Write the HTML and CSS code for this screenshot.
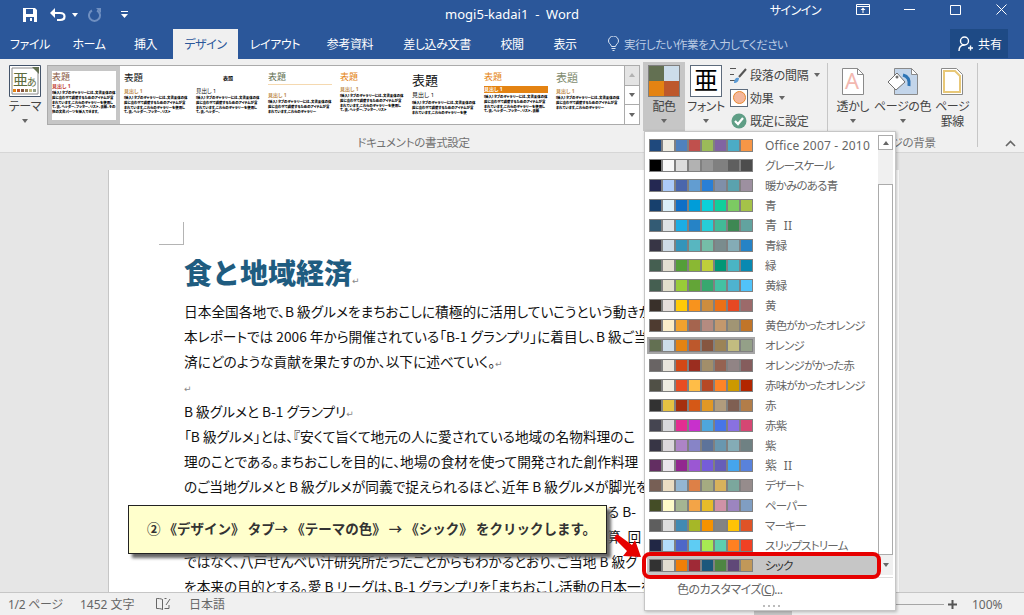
FILE: index.html
```html
<!DOCTYPE html>
<html lang="ja">
<head>
    <meta charset="UTF-8">
    <title>mogi5-kadai1 - Word</title>
    <link rel="stylesheet" href="styles.css">
</head>
<body>
<div class="app">

    <!-- タイトルバー -->
    <header class="titlebar">
        <div class="qat">
            <svg class="qat-save" width="16" height="16" viewBox="0 0 16 16"><path fill="#fff" d="M1 1h12l2 2v12H1z"/><path fill="#2b579a" d="M4 2h7v5H4zM4 10h8v5H4z"/><path fill="#fff" d="M8 11h2v3H8z"/></svg>
            <svg class="qat-undo" width="17" height="14" viewBox="0 0 17 14"><path fill="none" stroke="#fff" stroke-width="2.2" d="M3 5h7c6 0 6 7 0 7H7"/><path fill="#fff" d="M0 5l5-5v10z"/></svg>
            <i class="caret caret-white qat-caret"></i>
            <svg class="qat-redo" width="14" height="14" viewBox="0 0 14 14"><path fill="none" stroke="#6f8fc0" stroke-width="2" d="M9 2.5a5.5 5.5 0 1 1-5 0"/><path fill="#6f8fc0" d="M8 0h5v5z"/></svg>
            <svg class="qat-more" width="7" height="8" viewBox="0 0 7 8"><path fill="#fff" d="M0 0h7v1H0zM0 3h7L3.5 7z"/></svg>
        </div>
        <div class="doc-title">mogi5-kadai1&nbsp; - &nbsp;Word</div>
        <div class="win">
            <span class="signin">サインイン</span>
            <span class="win-btn"><svg width="14" height="11" viewBox="0 0 14 11"><path fill="none" stroke="#fff" d="M.5.5h13v10H.5zM.5 2.5h13"/><path fill="#fff" d="M7 3.5L4.500 6h2v3h1V6h2z"/></svg></span>
            <span class="win-btn"><svg width="11" height="2" viewBox="0 0 11 2"><path fill="#fff" d="M0 0h11v1H0z"/></svg></span>
            <span class="win-btn"><svg width="11" height="10" viewBox="0 0 11 10"><path fill="none" stroke="#fff" d="M.5.5h10v9H.5z"/></svg></span>
            <span class="win-btn"><svg width="11" height="11" viewBox="0 0 11 11"><path stroke="#fff" d="M.5.5l10 10M10.500.5l-10 10"/></svg></span>
        </div>
    </header>

    <!-- タブ -->
    <nav class="tabs">
        <span class="tab">ファイル</span>
        <span class="tab">ホーム</span>
        <span class="tab">挿入</span>
        <span class="tab tab-active">デザイン</span>
        <span class="tab">レイアウト</span>
        <span class="tab">参考資料</span>
        <span class="tab">差し込み文書</span>
        <span class="tab">校閲</span>
        <span class="tab">表示</span>
        <span class="tell">
            <svg width="11" height="15" viewBox="0 0 11 15"><path fill="none" stroke="#dbe5f3" d="M3.500 10.500C3 8 .5 7.500.5 5a5 5 0 0 1 10 0c0 2.500-2.500 3-3 5.500zM3.500 12.500h4M4.500 14.500h2"/></svg>
            実行したい作業を入力してください
        </span>
        <span class="share">
            <svg width="15" height="15" viewBox="0 0 15 15"><circle cx="6.500" cy="5" r="4" fill="none" stroke="#fff" stroke-width="1.400"/><path fill="none" stroke="#fff" stroke-width="1.400" d="M1 15c0-4 2-6 5.500-6M10 12h5M12.500 9.500v5"/></svg>
            共有
        </span>
    </nav>

    <!-- リボン -->
    <section class="ribbon">
        <div class="group group-doc">
            <div class="group-row">
                <div class="big-btn btn-theme">
                    <svg class="big-icon" width="32" height="32" viewBox="0 0 32 32">
                        <path fill="#fff" stroke="#44546a" d="M.5.5h31v31H.5z"/>
                        <path fill="#fff" stroke="#8a8a8a" d="M3 3h22l4 4v22H3z"/>
                        <path fill="#637052" d="M23 2h7v7z"/>
                        <text x="4" y="20" class="theme-kanji">亜</text>
                        <text x="18" y="21" class="theme-kana">あ</text>
                        <path fill="#e48312" d="M4 24h3v3H4z"/><path fill="#bd582c" d="M8 24h3v3H8z"/><path fill="#865640" d="M12 24h3v3h-3z"/><path fill="#9b8357" d="M16 24h3v3h-3z"/><path fill="#c2bc80" d="M20 24h3v3h-3z"/><path fill="#94a088" d="M24 24h3v3h-3z"/>
                    </svg>
                    <span class="big-label">テーマ</span>
                    <i class="caret"></i>
                </div>

                <div class="gallery">
                    <div class="thumb thumb-sel">
                        <b class="t-title t-brown">表題</b>
                        <b class="t-head t-red">見出し 1</b>
                        <p class="t-body">[挿入] タブのギャラリーには、文書全体の体裁に合わせて調整するためのアイテムが含まれています。これらのギャラリーを使用して、表、ヘッダー、フッター、リスト、表紙、その他の文書パーツを挿入できます。</p>
                    </div>
                    <div class="thumb">
                        <b class="t-title t-black">表題</b>
                        <b class="t-head t-tan">見出し 1</b>
                        <p class="t-body">[挿入] タブのギャラリーには、文書全体の体裁に合わせて調整するためのアイテムが含まれています。これらのギャラリーを使用して、表、ヘッダー、フッター、リスト</p>
                    </div>
                    <div class="thumb">
                        <b class="t-title t-small">表題</b>
                        <b class="t-head t-ink">見出し 1</b>
                        <p class="t-body">[挿入] タブのギャラリーには、文書全体の体裁に合わせて調整するためのアイテムが含まれています。これらのギャラリーを使用して、表、ヘッダー、</p>
                    </div>
                    <div class="thumb">
                        <b class="t-title t-green t-lined">表題</b>
                        <b class="t-head t-tan">見出し 1</b>
                        <p class="t-body">[挿入] タブのギャラリーには、文書全体の体裁に合わせて調整するためのアイテムが含まれています。これらのギャラリー</p>
                    </div>
                    <div class="thumb">
                        <b class="t-title t-orange">表題</b>
                        <b class="t-head t-tan">見出し 1</b>
                        <p class="t-body">[挿入] タブのギャラリーには、文書全体の体裁に合わせて調整するためのアイテムが含まれています。これらのギャラリーを使用して、表、ヘッダー、フッター、リスト</p>
                    </div>
                    <div class="thumb">
                        <b class="t-title t-huge">表題</b>
                        <b class="t-head t-ink t-wide">見出し 1</b>
                        <p class="t-body">[挿入] タブのギャラリーには、文書全体の体裁に合わせて調整するためのアイテムが含まれています。これらのギャラリーを使</p>
                    </div>
                    <div class="thumb">
                        <b class="t-title t-orange">表題</b>
                        <b class="t-head t-band">見出し 1</b>
                        <p class="t-body">[挿入] タブのギャラリーには、文書全体の体裁に合わせて調整するためのアイテムが含まれています。これらのギャラリーを使用して、表、ヘッダー、フッター、リスト、表紙</p>
                    </div>
                    <div class="thumb">
                        <b class="t-title t-sage">表題</b>
                        <b class="t-head t-tan">見出し 1</b>
                        <p class="t-body">[挿入] タブのギャラリーには、文書全体の体裁に合わせて調整するためのアイテムが含まれています。これらのギャラリー</p>
                    </div>
                    <div class="gallery-scroll">
                        <span class="gs-btn gs-off"><i class="caret caret-up"></i></span>
                        <span class="gs-btn"><i class="caret"></i></span>
                        <span class="gs-btn gs-more"><i class="caret"></i></span>
                    </div>
                </div>

                <div class="big-btn btn-scheme">
                    <span class="scheme-icon"><i class="s1"></i><i class="s2"></i><i class="s3"></i><i class="s4"></i></span>
                    <span class="big-label">配色</span>
                    <i class="caret"></i>
                </div>

                <div class="big-btn">
                    <span class="font-icon">亜</span>
                    <span class="big-label">フォント</span>
                    <i class="caret"></i>
                </div>

                <div class="options">
                    <div class="opt">
                        <svg width="18" height="18" viewBox="0 0 18 18"><path stroke="#555" d="M0 2.500h6M0 8.500h4M0 14.500h5"/><path fill="#5b9bd5" d="M4 17c0-4 2-6 5-5 0 3-2 5-5 5z"/><path stroke="#555" stroke-width="2" d="M9 11l7-8"/></svg>
                        <span>段落の間隔</span><i class="caret"></i>
                    </div>
                    <div class="opt">
                        <span class="fx-box"><i></i></span>
                        <span>効果</span><i class="caret"></i>
                    </div>
                    <div class="opt">
                        <svg width="18" height="18" viewBox="0 0 18 18"><circle cx="9" cy="9" r="7.500" fill="#5f9e86"/><path fill="none" stroke="#fff" stroke-width="2.200" d="M5 9l3 3 5-6"/></svg>
                        <span>既定に設定</span>
                    </div>
                </div>
            </div>
            <div class="group-label">ドキュメントの書式設定</div>
        </div>
        <span class="sep"></span>

        <div class="group group-page">
            <div class="group-row">
                <div class="big-btn btn-page">
                    <svg class="big-icon" width="24" height="32" viewBox="0 0 24 32"><path fill="#fff" stroke="#8a8a8a" d="M1.500 3.500h15l6 6v20h-21z"/><path fill="none" stroke="#8a8a8a" d="M16.500 3.500v6h6"/><text x="4" y="24" class="wm-letter">A</text></svg>
                    <span class="big-label">透かし</span>
                    <i class="caret"></i>
                </div>
                <div class="big-btn btn-page">
                    <svg class="big-icon" width="32" height="32" viewBox="0 0 32 32"><path fill="#c3d5ea" stroke="#8a8a8a" d="M7.500 3.500h17l6 6v20h-23z"/><path fill="#fff" stroke="#8a8a8a" d="M24.500 3.500v6h6z"/><path fill="none" stroke="#2e75b6" stroke-width="3" d="M16 10c4 1 7 4 6 11"/><path fill="#fff" stroke="#6e6e6e" d="M1 17l9-9 8 9-9 8z"/><circle cx="10" cy="12" r="1.500" fill="#6e6e6e"/></svg>
                    <span class="big-label">ページの色</span>
                    <i class="caret"></i>
                </div>
                <div class="big-btn btn-page">
                    <svg class="big-icon" width="24" height="32" viewBox="0 0 24 32"><path fill="#fff" stroke="#8a8a8a" d="M1.500 3.500h15l6 6v20h-21z"/><path fill="none" stroke="#e8c878" stroke-width="2" d="M4 6h11l5 5v16H4z"/></svg>
                    <span class="big-label">ページ<br>罫線</span>
                </div>
            </div>
            <div class="group-label">ページの背景</div>
        </div>
        <span class="sep"></span>
        <svg class="collapse" width="11" height="7" viewBox="0 0 11 7"><path fill="none" stroke="#666" stroke-width="1.600" d="M1 6l4.500-4.500L10 6"/></svg>
    </section>

    <!-- 文書 -->
    <main class="workspace">
        <article class="page">
            <div class="crop"></div>
            <h1 class="doc-head">食と地域経済<i class="pm">↵</i></h1>
            <p class="line">日本全国各地で、B 級グルメをまちおこしに積極的に活用していこうという動きが</p>
            <p class="line">本レポートでは 2006 年から開催されている「B-1 グランプリ」に着目し、B 級ご当</p>
            <p class="line">済にどのような貢献を果たすのか、以下に述べていく。<i class="pm">↵</i></p>
            <p class="line"><i class="pm">↵</i></p>
            <p class="line">B 級グルメと B-1 グランプリ<i class="pm">↵</i></p>
            <p class="line">「B 級グルメ」とは、『安くて旨くて地元の人に愛されている地域の名物料理のこ</p>
            <p class="line">理のことである。まちおこしを目的に、地場の食材を使って開発された創作料理</p>
            <p class="line">のご当地グルメと B 級グルメが同義で捉えられるほど、近年 B 級グルメが脚光を</p>
            <p class="line line-behind">る B-</p>
            <p class="line line-behind">算、回</p>
            <p class="line">ではなく、八戸せんべい汁研究所だったことからもわかるとおり、ご当地 B 級グ</p>
            <p class="line">を本来の目的とする。愛 B リーグは、B-1 グランプリを「まちおこし活動の日本一を</p>
        </article>
    </main>

    <!-- ステータスバー -->
    <footer class="status">
        <span class="st-page">1/2 ページ</span>
        <span class="st-words">1452 文字</span>
        <svg class="st-book" width="16" height="14" viewBox="0 0 16 14"><path fill="none" stroke="#666" d="M7.500 2.500C6 1.500 3 1.500 1.500 1.500v10c2 0 4.500 0 6 1zM7.500 12.500V2.500M9.500 1.500h2M9.500 11.500h4.500V8M11 8l4-6"/></svg>
        <span class="st-lang">日本語</span>
        <span class="st-view"></span>
        <span class="st-slider"></span>
        <svg class="st-plus" width="9" height="9" viewBox="0 0 9 9"><path fill="#555" d="M3.500 0h2v3.500H9v2H5.500V9h-2V5.500H0v-2h3.500z"/></svg>
        <span class="st-zoom">100%</span>
    </footer>

    <!-- 配色ドロップダウン -->
    <div class="menu">
        <div class="menu-body">
            <ul class="schemes">
                <li class="scheme scheme-latin"><span class="strip"><i style="background:#1f497d"></i><i style="background:#eeece1"></i><i style="background:#4f81bd"></i><i style="background:#c0504d"></i><i style="background:#9bbb59"></i><i style="background:#8064a2"></i><i style="background:#4bacc6"></i><i style="background:#f79646"></i></span>Office 2007 - 2010</li>
                <li class="scheme"><span class="strip"><i style="background:#000000"></i><i style="background:#f8f8f8"></i><i style="background:#dddddd"></i><i style="background:#b2b2b2"></i><i style="background:#969696"></i><i style="background:#808080"></i><i style="background:#5f5f5f"></i><i style="background:#4d4d4d"></i></span>グレースケール</li>
                <li class="scheme"><span class="strip"><i style="background:#242852"></i><i style="background:#accbf9"></i><i style="background:#4a66ac"></i><i style="background:#629dd1"></i><i style="background:#297fd5"></i><i style="background:#7f8fa9"></i><i style="background:#5aa2ae"></i><i style="background:#9d90a0"></i></span>暖かみのある青</li>
                <li class="scheme"><span class="strip"><i style="background:#17406d"></i><i style="background:#dbeff9"></i><i style="background:#0f6fc6"></i><i style="background:#009dd9"></i><i style="background:#0bd0d9"></i><i style="background:#10cf9b"></i><i style="background:#7cca62"></i><i style="background:#a5c249"></i></span>青</li>
                <li class="scheme scheme-latin"><span class="strip"><i style="background:#335b74"></i><i style="background:#dfe3e5"></i><i style="background:#1cade4"></i><i style="background:#2683c6"></i><i style="background:#27ced7"></i><i style="background:#42ba97"></i><i style="background:#3e8853"></i><i style="background:#62a39f"></i></span>青&nbsp; II</li>
                <li class="scheme"><span class="strip"><i style="background:#373545"></i><i style="background:#cedbe6"></i><i style="background:#3494ba"></i><i style="background:#58b6c0"></i><i style="background:#75bda7"></i><i style="background:#7a8c8e"></i><i style="background:#84acb6"></i><i style="background:#2683c6"></i></span>青緑</li>
                <li class="scheme"><span class="strip"><i style="background:#455f51"></i><i style="background:#e3ded1"></i><i style="background:#549e39"></i><i style="background:#8ab833"></i><i style="background:#c0cf3a"></i><i style="background:#029676"></i><i style="background:#4ab5c4"></i><i style="background:#0989b1"></i></span>緑</li>
                <li class="scheme"><span class="strip"><i style="background:#455f51"></i><i style="background:#e2dfcc"></i><i style="background:#99cb38"></i><i style="background:#63a537"></i><i style="background:#37a76f"></i><i style="background:#44c1a3"></i><i style="background:#4eb3cf"></i><i style="background:#51c3f9"></i></span>黄緑</li>
                <li class="scheme"><span class="strip"><i style="background:#39302a"></i><i style="background:#e5dedb"></i><i style="background:#ffca08"></i><i style="background:#f8931d"></i><i style="background:#ce8d3e"></i><i style="background:#ec7016"></i><i style="background:#e64823"></i><i style="background:#9c6a6a"></i></span>黄</li>
                <li class="scheme"><span class="strip"><i style="background:#4e3b30"></i><i style="background:#fbeec9"></i><i style="background:#f0a22e"></i><i style="background:#a5644e"></i><i style="background:#b58b80"></i><i style="background:#c3986d"></i><i style="background:#a19574"></i><i style="background:#c17529"></i></span>黄色がかったオレンジ</li>
                <li class="scheme"><span class="strip strip-on"><i style="background:#637052"></i><i style="background:#ccddea"></i><i style="background:#e48312"></i><i style="background:#bd582c"></i><i style="background:#865640"></i><i style="background:#9b8357"></i><i style="background:#c2bc80"></i><i style="background:#94a088"></i></span>オレンジ</li>
                <li class="scheme"><span class="strip"><i style="background:#696464"></i><i style="background:#e9e5dc"></i><i style="background:#d34817"></i><i style="background:#9b2d1f"></i><i style="background:#a28e6a"></i><i style="background:#956251"></i><i style="background:#918485"></i><i style="background:#855d5d"></i></span>オレンジがかった赤</li>
                <li class="scheme"><span class="strip"><i style="background:#505046"></i><i style="background:#eeece1"></i><i style="background:#e84c22"></i><i style="background:#ffbd47"></i><i style="background:#b64926"></i><i style="background:#ff8427"></i><i style="background:#cc9900"></i><i style="background:#b22600"></i></span>赤味がかったオレンジ</li>
                <li class="scheme"><span class="strip"><i style="background:#323232"></i><i style="background:#e5c243"></i><i style="background:#a5300f"></i><i style="background:#d55816"></i><i style="background:#e19825"></i><i style="background:#b19c7d"></i><i style="background:#7f5f52"></i><i style="background:#b27d49"></i></span>赤</li>
                <li class="scheme"><span class="strip"><i style="background:#454551"></i><i style="background:#d8d9dc"></i><i style="background:#e32d91"></i><i style="background:#c830cc"></i><i style="background:#4ea6dc"></i><i style="background:#4775e7"></i><i style="background:#8971e1"></i><i style="background:#d54773"></i></span>赤紫</li>
                <li class="scheme"><span class="strip"><i style="background:#373545"></i><i style="background:#dcd8dc"></i><i style="background:#ad84c6"></i><i style="background:#8784c7"></i><i style="background:#5d739a"></i><i style="background:#6997af"></i><i style="background:#84acb6"></i><i style="background:#6f8183"></i></span>紫</li>
                <li class="scheme scheme-latin"><span class="strip"><i style="background:#632e62"></i><i style="background:#eae5eb"></i><i style="background:#92278f"></i><i style="background:#9b57d3"></i><i style="background:#755dd9"></i><i style="background:#665eb8"></i><i style="background:#45a5ed"></i><i style="background:#5982db"></i></span>紫&nbsp; II</li>
                <li class="scheme"><span class="strip"><i style="background:#775f55"></i><i style="background:#ebddc3"></i><i style="background:#94b6d2"></i><i style="background:#dd8047"></i><i style="background:#a5ab81"></i><i style="background:#d8b25c"></i><i style="background:#7ba79d"></i><i style="background:#968c8c"></i></span>デザート</li>
                <li class="scheme"><span class="strip"><i style="background:#444d26"></i><i style="background:#fefac9"></i><i style="background:#a5b592"></i><i style="background:#f3a447"></i><i style="background:#e7bc29"></i><i style="background:#d092a7"></i><i style="background:#9c85c0"></i><i style="background:#809ec2"></i></span>ペーパー</li>
                <li class="scheme"><span class="strip"><i style="background:#5e5e5e"></i><i style="background:#dddddd"></i><i style="background:#418ab3"></i><i style="background:#a6b727"></i><i style="background:#f69200"></i><i style="background:#838383"></i><i style="background:#fec306"></i><i style="background:#df5327"></i></span>マーキー</li>
                <li class="scheme"><span class="strip"><i style="background:#212745"></i><i style="background:#b4dcfa"></i><i style="background:#4e67c8"></i><i style="background:#5eccf3"></i><i style="background:#a7ea52"></i><i style="background:#5dceaf"></i><i style="background:#ff8021"></i><i style="background:#f14124"></i></span>スリップストリーム</li>
                <li class="scheme scheme-hover"><span class="strip"><i style="background:#323232"></i><i style="background:#e3ded1"></i><i style="background:#f07f09"></i><i style="background:#9f2936"></i><i style="background:#1b587c"></i><i style="background:#4e8542"></i><i style="background:#604878"></i><i style="background:#c19859"></i></span>シック</li>
            </ul>
            <div class="menu-bar">
                <span class="bar-up"><i class="caret caret-up"></i></span>
                <span class="bar-thumb"></span>
                <span class="bar-down"><i class="caret"></i></span>
            </div>
        </div>
        <div class="menu-custom">色のカスタマイズ(<u>C</u>)...</div>
        <div class="menu-grip"><i></i><i></i><i></i><i></i></div>
    </div>

    <!-- 注釈 -->
    <div class="red-frame"></div>
    <div class="callout">② 《デザイン》 タブ→ 《テーマの色》 → 《シック》 をクリックします。</div>
    <svg class="red-arrow" width="28" height="24" viewBox="0 0 28 24"><path fill="#e60000" d="M0 4l3-4 15 11 3-5 6 17-18-1 4-5z"/></svg>
</div>
</body>
</html>
```

FILE: styles.css
```css
*{
    margin: 0;
    padding: 0;
    box-sizing: border-box;
}

i{
    font-style: normal;
}

body{
    width: 1024px;
    height: 615px;
    overflow: hidden;
    font-family: "Noto Sans", "Noto Sans CJK JP", sans-serif;
    font-size: 12px;
    color: #444;
}

.app{
    position: relative;
    width: 1024px;
    height: 615px;
    display: flex;
    flex-direction: column;
    background: #e6e6e6;
    font-feature-settings: "palt";
}

.caret{
    display: block;
    width: 0;
    height: 0;
    border-left: 3.5px solid transparent;
    border-right: 3.5px solid transparent;
    border-top: 4px solid #666;
}

.caret-up{
    border-top: 0;
    border-bottom: 4px solid #666;
}

.caret-white{
    border-top-color: #fff;
}

/* タイトルバー */
.titlebar{
    height: 29px;
    display: grid;
    grid-template-columns: 1fr auto 1fr;
    align-items: center;
    background: #2b579a;
    color: #fff;
}

.qat{
    display: flex;
    align-items: center;
    padding-left: 22px;
}

.qat-undo{
    margin-left: 12px;
}

.qat-caret{
    margin-left: 5px;
}

.qat-redo{
    margin-left: 10px;
}

.qat-more{
    margin-left: 19px;
}

.doc-title{
    font-size: 13px;
    padding-bottom: 2px;
}

.win{
    display: flex;
    align-items: center;
    justify-content: flex-end;
    height: 29px;
}

.signin{
    margin-right: 19px;
    font-size: 12px;
    letter-spacing: -.5px;
    padding-bottom: 10px;
}

.win-btn{
    width: 46px;
    height: 29px;
    display: flex;
    align-items: center;
    justify-content: center;
    padding-bottom: 10px;
}

/* タブ */
.tabs{
    height: 30px;
    display: grid;
    grid-template-columns: 60px 58px 55px 65px 74px 76px 98px 52px 54px 1fr auto;
    background: #2b579a;
    color: #fff;
}

.tab{
    display: flex;
    align-items: center;
    justify-content: center;
    padding-bottom: 1px;
    font-size: 12px;
    letter-spacing: -.4px;
}

.tab-active{
    background: #f0f0f0;
    color: #2b579a;
}

.tell{
    display: flex;
    align-items: center;
    gap: 5px;
    padding: 0 0 1px 16px;
    color: #bccce4;
    font-size: 11.500px;
    letter-spacing: -.5px;
}

.share{
    display: flex;
    align-items: center;
    gap: 5px;
    width: 58px;
    height: 29px;
    margin-right: 16px;
    padding-left: 8px;
    background: #1e4a85;
    font-size: 12px;
}

/* リボン */
.ribbon{
    height: 94px;
    display: flex;
    background: #f0f0f0;
    border-bottom: 1px solid #d6d6d6;
}

.group{
    display: flex;
    flex-direction: column;
    justify-content: space-between;
}

.group-doc{
    width: 827px;
}

.group-page{
    width: 149px;
}

.group-row{
    display: flex;
    padding-top: 3px;
}

.group-doc .group-row{
    padding-left: 3px;
}

.group-label{
    height: 18px;
    line-height: 18px;
    text-align: center;
    color: #707070;
    font-size: 11.500px;
    letter-spacing: -.3px;
}

.sep{
    width: 1px;
    margin: 4px 0 5px;
    background: #c6c6c6;
}

.collapse{
    margin: 0 0 5px 27px;
    align-self: flex-end;
}

.big-btn{
    width: 42px;
    min-height: 69px;
    display: flex;
    flex-direction: column;
    align-items: center;
    padding-top: 3px;
}

.big-icon{
    flex: none;
}

.big-label{
    margin-top: 2px;
    line-height: 15px;
    letter-spacing: -.4px;
    text-align: center;
    white-space: nowrap;
}

.big-btn .caret{
    margin-top: 5px;
}

.btn-theme{
    width: 44px;
}

.btn-page{
    width: 50px;
}

.btn-scheme{
    background: #c6c6c6;
}

.theme-kanji{
    font-size: 15px;
    fill: #5d6b3d;
}

.theme-kana{
    font-size: 10px;
    fill: #5d6b3d;
}

.wm-letter{
    font-size: 22px;
    fill: #f2b8b0;
}

.scheme-icon{
    width: 32px;
    height: 32px;
    display: grid;
    grid-template-columns: 1fr 1fr;
    border: 1px solid #7f7f7f;
}

.s1{ background: #637052; }
.s2{ background: #ccddea; }
.s3{ background: #e48312; }
.s4{ background: #bd582c; }

.font-icon{
    width: 32px;
    height: 32px;
    border: 1px solid #5d6b7c;
    background: #fff;
    color: #000;
    font-size: 24px;
    line-height: 28px;
    text-align: center;
}

/* スタイルギャラリー */
.gallery{
    position: relative;
    width: 593px;
    height: 60px;
    margin: 3px 3px 0 0;
    display: flex;
    padding-right: 15px;
    border: 1px solid #ababab;
    background: #fff;
    overflow: hidden;
}

.thumb{
    flex: none;
    width: 72px;
    height: 52px;
    padding: 5px 4px 0;
    overflow: hidden;
}

.thumb-sel{
    height: 58px;
    border: 4px solid #c6c6c6;
    border-top-width: 5px;
    padding: 0;
}

.t-title{
    display: block;
    font-size: 9px;
    line-height: 12px;
    font-weight: 400;
}

.t-black{ color: #111; font-size: 9.500px; line-height: 14px; }
.t-small{ color: #111; font-size: 5px; text-align: center; line-height: 14px; font-weight: 700; }
.t-huge{ color: #111; font-size: 13px; line-height: 19px; }
.t-brown{ color: #8a5a44; }
.t-green{ color: #637052; }
.t-sage{ color: #7f8c6f; font-size: 11px; line-height: 14px; }
.t-orange{ color: #e48312; }
.t-lined{ height: 14px; margin-bottom: 7px; border-bottom: 1px solid #f5d9b0; }

.t-head{
    display: block;
    font-size: 5px;
    line-height: 6px;
    font-weight: 700;
    margin-top: 3px;
}

.t-red{ color: #c0392b; margin-top: 0; }
.t-tan{ color: #bd8a4c; }
.t-ink{ color: #111; font-weight: 400; font-size: 5.500px; }
.t-wide{ margin-top: 1px; font-size: 6px; line-height: 8px; }
.t-band{ color: #fff; background: #e48312; margin-top: 3px; height: 7px; }

.t-body{
    font-size: 3.400px;
    line-height: 4.800px;
    font-weight: 900;
    color: #000;
    margin-top: 2px;
}

.gallery-scroll{
    position: absolute;
    top: 0;
    right: 0;
    width: 15px;
    height: 58px;
    display: flex;
    flex-direction: column;
    background: #f0f0f0;
    border-left: 1px solid #ababab;
}

.gs-btn{
    flex: 1;
    display: flex;
    align-items: center;
    justify-content: center;
    background: #fff;
    border-bottom: 1px solid #ababab;
}

.gs-off{
    background: #e4e4e4;
}

.gs-off .caret{
    opacity: .4;
}

.gs-more{
    border-bottom: 0;
}

.options{
    display: flex;
    flex-direction: column;
    gap: 4px;
    padding: 3px 0 0 3px;
}

.opt{
    height: 19px;
    display: flex;
    align-items: center;
    gap: 2px;
    letter-spacing: -.2px;
    white-space: nowrap;
}

.fx-box{
    width: 18px;
    height: 18px;
    display: flex;
    align-items: center;
    justify-content: center;
    border: 1px solid #5d6b7c;
    background: #fff;
}

.fx-box i{
    width: 13px;
    height: 13px;
    border-radius: 50%;
    background: #f4b79c;
    border: 1px solid #e98a2e;
}

.opt .caret{
    margin-left: 3px;
}

/* 文書 */
.workspace{
    flex: 1;
    min-height: 0;
    padding: 17px 0 0 108px;
    overflow: hidden;
}

.page{
    width: 791px;
    height: 500px;
    padding-top: 52px;
    background: #fff;
    border-left: 1px solid #c6c6c6;
    color: #111;
    font-family: "Noto Sans CJK JP", sans-serif;
    font-size: 13.700px;
}

.crop{
    width: 25px;
    height: 23px;
    margin-left: 50px;
    border-right: 1px solid #b4b4b4;
    border-bottom: 1px solid #b4b4b4;
}

.doc-head{
    height: 54px;
    padding-left: 75px;
    font-size: 28px;
    line-height: 54px;
    font-weight: 900;
    color: #1f5c80;
    font-feature-settings: normal;
    white-space: nowrap;
}

.line{
    height: 25px;
    padding-left: 75px;
    line-height: 25px;
    white-space: nowrap;
}

.line-behind{
    padding-left: 498px;
}

.pm{
    font-family: "DejaVu Sans", sans-serif;
    font-size: 9px;
    font-weight: 400;
    color: #888;
}

/* ステータスバー */
.status{
    height: 23px;
    display: flex;
    align-items: center;
    padding-left: 8px;
    background: #f0f0f0;
    border-top: 1px solid #c6c6c6;
    color: #666;
    font-size: 12px;
    white-space: nowrap;
}

.st-page{
    width: 72px;
    letter-spacing: -.3px;
}

.st-words{
    width: 75px;
}

.st-lang{
    width: 34px;
    margin-left: 18px;
}

.st-view{
    width: 38px;
    height: 22px;
    margin-left: 531px;
    background: #c6c6c6;
}

.st-slider{
    width: 93px;
    height: 1px;
    margin-left: 59px;
    background: #a6a6a6;
}

.st-plus{
    margin-left: 4px;
}

.st-zoom{
    margin-left: 15px;
}

/* 配色メニュー */
.menu{
    position: absolute;
    left: 644px;
    top: 131px;
    width: 252px;
    height: 480px;
    padding: 3px 2px 0 2px;
    background: #fff;
    border: 1px solid #c6c6c6;
    box-shadow: 1px 1px 3px rgba(0, 0, 0, .25);
}

.menu-body{
    display: flex;
    border-bottom: 1px solid #dcdcdc;
    padding-bottom: 2px;
}

.schemes{
    width: 232px;
    list-style: none;
}

.scheme{
    height: 20px;
    display: flex;
    align-items: center;
    gap: 12px;
    padding-left: 2px;
    color: #666;
    font-size: 11.500px;
    letter-spacing: -.8px;
    white-space: nowrap;
}

.scheme-latin{
    font-size: 12px;
    letter-spacing: .2px;
}

.scheme-hover{
    background: #c6c6c6;
    color: #333;
}

.strip{
    width: 104px;
    height: 13px;
    display: flex;
    gap: 2px;
    padding: 1px;
    background: #808080;
}

.strip i{
    width: 11px;
    height: 11px;
}

.strip-on{
    outline: 2px solid #a6a6a6;
}

.menu-bar{
    width: 15px;
    margin-left: 1px;
    display: flex;
    flex-direction: column;
    background: #f0f0f0;
}

.bar-up{
    height: 15px;
    display: flex;
    align-items: center;
    justify-content: center;
    background: #fff;
    border: 1px solid #ababab;
}

.bar-thumb{
    height: 371px;
    margin-top: 34px;
    background: #fff;
    border: 1px solid #ababab;
}

.bar-down{
    flex: 1;
    display: flex;
    align-items: center;
    justify-content: center;
}

.menu-custom{
    height: 23px;
    padding-left: 30px;
    line-height: 24px;
    letter-spacing: -.5px;
    color: #666;
}

.menu-grip{
    display: flex;
    justify-content: center;
    gap: 3px;
    padding: 4px 0 0 3px;
}

.menu-grip i{
    width: 2px;
    height: 2px;
    background: #bcbcbc;
}

/* 注釈 */
.red-frame{
    position: absolute;
    left: 642px;
    top: 552px;
    width: 239px;
    height: 27px;
    border: 4px solid #e60000;
    border-radius: 8px;
}

.callout{
    position: absolute;
    left: 128px;
    top: 505px;
    width: 479px;
    height: 49px;
    padding-left: 18px;
    line-height: 45px;
    background: #ffffcc;
    border: 1px solid #222;
    box-shadow: 4px 4px 3px #666;
    color: #333;
    font-family: "Noto Sans CJK JP", sans-serif;
    font-size: 13.500px;
    font-weight: 700;
    font-feature-settings: normal;
    white-space: nowrap;
}

.red-arrow{
    position: absolute;
    left: 614px;
    top: 534px;
}
```
